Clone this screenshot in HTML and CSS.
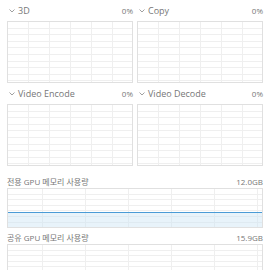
FILE: index.html
```html
<!DOCTYPE html>
<html lang="ko">
<head>
  <meta charset="UTF-8">
  <title>GPU</title>
  <link rel="stylesheet" href="styles.css">
</head>
<body>
  <div class="engines">
    <div class="engine">
      <div class="engine-head"><span class="name"><svg class="chev" width="6" height="4" viewBox="0 0 6 4"><polyline points="0.5,0.5 3,3 5.5,0.5"/></svg>3D</span><span class="pct">0%</span></div>
      <div class="chart"></div>
    </div>
    <div class="engine">
      <div class="engine-head"><span class="name"><svg class="chev" width="6" height="4" viewBox="0 0 6 4"><polyline points="0.5,0.5 3,3 5.5,0.5"/></svg>Copy</span><span class="pct">0%</span></div>
      <div class="chart"></div>
    </div>
    <div class="engine">
      <div class="engine-head"><span class="name"><svg class="chev" width="6" height="4" viewBox="0 0 6 4"><polyline points="0.5,0.5 3,3 5.5,0.5"/></svg>Video Encode</span><span class="pct">0%</span></div>
      <div class="chart"></div>
    </div>
    <div class="engine">
      <div class="engine-head"><span class="name"><svg class="chev" width="6" height="4" viewBox="0 0 6 4"><polyline points="0.5,0.5 3,3 5.5,0.5"/></svg>Video Decode</span><span class="pct">0%</span></div>
      <div class="chart"></div>
    </div>
  </div>

  <div class="memory">
    <div class="mem-head"><span>전용 GPU 메모리 사용량</span><span>12.0GB</span></div>
    <div class="mem-chart">
      <div class="mem-fill" style="height: 14px"></div>
    </div>
    <div class="mem-head"><span>공유 GPU 메모리 사용량</span><span>15.9GB</span></div>
    <div class="mem-chart shared"></div>
  </div>
</body>
</html>
```

FILE: styles.css
```css
body {
  margin: 0;
  padding: 0 7px;
  width: 256px;
  background: #fff;
  font-family: "Open Sans", "Noto Sans CJK KR", sans-serif;
  color: #777;
  overflow: hidden;
}

.engines {
  display: grid;
  grid-template-columns: 126px 126px;
  column-gap: 4px;
}

.engine-head {
  display: flex;
  justify-content: space-between;
  align-items: center;
  height: 21px;
  font-size: 9px;
  padding-left: 2px;
}

.name {
  display: flex;
  align-items: center;
  gap: 3px;
}

.engine-head .pct {
  font-size: 8px;
}

.chev {
  fill: none;
  stroke: #a0a0a0;
  stroke-width: 1;
}

.chart {
  height: 62px;
  border: 1px solid #e0e0e0;
  box-sizing: border-box;
  background-image:
    repeating-linear-gradient(to right, transparent 0 20px, #efefef 20px 21px),
    repeating-linear-gradient(to bottom, transparent 0 5.6px, #efefef 5.6px 6.6px);
}

.memory {
  margin-top: 8px;
}

.mem-head {
  display: flex;
  justify-content: space-between;
  align-items: center;
  height: 14px;
  font-size: 8px;
}

.mem-chart {
  height: 40px;
  border: 1px solid #e0e0e0;
  box-sizing: border-box;
  margin-bottom: 2px;
  display: flex;
  flex-direction: column;
  justify-content: flex-end;
  background-image:
    repeating-linear-gradient(to right, transparent 0 34px, #efefef 34px 35px, transparent 35px 43px),
    repeating-linear-gradient(to bottom, transparent 0 4.6px, #efefef 4.6px 5.6px);
}

.mem-fill {
  border-top: 1px solid #4a9bd6;
  background: rgba(205, 228, 244, 0.45);
}

.shared {
  height: 30px;
}
```
